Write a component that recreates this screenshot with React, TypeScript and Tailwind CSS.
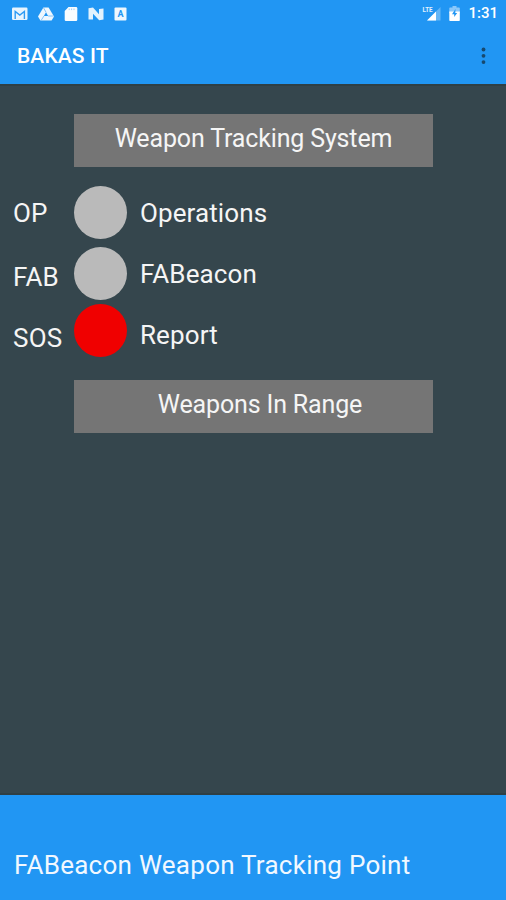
import type { ReactNode } from 'react';

const rows = [
  { code: 'OP', label: 'Operations' },
  { code: 'FAB', label: 'FABeacon' },
  { code: 'SOS', label: 'Report' },
];

function StatusBar() {
  return (
    <div className="flex h-[27px] items-center justify-between pl-3 pr-2">
      <div className="flex items-center gap-[10px]">
        {/* Mail */}
        <svg className="h-[14px] w-4" viewBox="0 0 16 14">
          <rect x="0" y=".5" width="15.500" height="12.500" rx="1.200" fill="#e8f4fe" />
          <path d="M3.200 12V4.500L7.800 8l4.600-3.500V12" fill="none" stroke="#2e9bf4" strokeWidth="1.400" />
        </svg>
        {/* Drive */}
        <svg className="h-[14px] w-4" viewBox="0 0 16 14">
          <path d="M5.400.5h5.200L16 9.500l-2.400 4H2.400L0 9.500z" fill="#eef7fe" />
          <path d="M8 5.200 5.900 9h4.200z" fill="#2196f3" />
          <path d="M8 5.200 5.500.800M10.100 9H15.500M5.900 9l-2.700 4.300" stroke="#6bb8f7" strokeWidth=".8" />
        </svg>
        {/* SD card */}
        <svg className="h-[14px] w-[14px]" viewBox="0 0 14 14">
          <path d="M4.500 0H12q1.300 0 1.300 1.300v11.400Q13.300 14 12 14H2q-1.300 0-1.300-1.300V4z" fill="#f8fcff" />
          <path d="M5.200 1.500v1.600M7.600 1.500v1.600M10 1.500v1.600" stroke="#9ed0fa" strokeWidth="1" />
        </svg>
        {/* Nougat */}
        <svg className="h-[14px] w-4" viewBox="0 0 16 14">
          <path d="M.5 1.300 5 .6l6 6.700V2l4.500-.6V12.500l-4.300.700-6.200-6.500V12.500H.5z" fill="#e3f2fd" />
        </svg>
        {/* Keyboard */}
        <svg className="h-[14px] w-[13px]" viewBox="0 0 13 14">
          <rect x=".5" y=".5" width="12" height="13" rx="1" fill="#eef7fe" />
          <text x="6.500" y="10.300" textAnchor="middle" className="text-[9px] font-bold" fill="#2196f3">
            A
          </text>
        </svg>
      </div>

      <div className="flex items-center">
        {/* Signal */}
        <svg className="mr-2 h-[15px] w-[20px]" viewBox="0 0 20 15">
          <path d="M19.500 1v13.500H6z" fill="#64b5f6" />
          <path d="M15 5.500v9H6z" fill="#fff" />
          <text x="1.500" y="6.300" textLength="10" lengthAdjust="spacingAndGlyphs" className="text-[7px] font-bold" fill="#e3f2fd">
            LTE
          </text>
        </svg>
        {/* Battery */}
        <svg className="mr-2 h-[15px] w-[11px]" viewBox="0 0 11 15">
          <path d="M3.500 0h4v1.500H10q.8 0 .8.800V7H.3V2.300q0-.8.800-.8h2.400z" fill="#8bc8fa" />
          <path d="M.3 5.500h10.500v8.700q0 .8-.8.800H1.100q-.8 0-.8-.8z" fill="#fff" />
          <path d="M6.500 3 3 8.300h2.200v2.800L8.200 7H6.300z" fill="#2196f3" />
        </svg>
        <span className="text-[15px] leading-none font-medium text-white">1:31</span>
      </div>
    </div>
  );
}

function Banner({ children }: { children: ReactNode }) {
  return (
    <div className="ml-[74px] h-[53px] w-[359px] bg-[#757575] pt-[10px] text-center text-[25px] leading-[30px] tracking-[-0.15px] text-[#f5f5f5]">
      {children}
    </div>
  );
}

export default function App() {
  return (
    <div className="flex h-[900px] w-[506px] flex-col overflow-hidden bg-[#35464d] font-[Roboto,sans-serif]">
      <header className="h-[84px] shrink-0 bg-[#2196f3]">
        <StatusBar />
        <div className="flex h-[58px] items-center justify-between pl-[17px] pr-[20px]">
          <h1 className="text-[21px] leading-[24px] font-medium tracking-[0.1px] text-white">BAKAS IT</h1>
          <svg className="h-[18px] w-[5px]" viewBox="0 0 5 18">
            <circle cx="2.5" cy="2.5" r="1.900" fill="#17496f" />
            <circle cx="2.5" cy="8.800" r="1.900" fill="#17496f" />
            <circle cx="2.5" cy="15.100" r="1.900" fill="#17496f" />
          </svg>
        </div>
      </header>

      <main className="flex-1 border-y-2 border-[#2f3f44] pt-7">
        <Banner>Weapon Tracking System</Banner>

        <div className="flex h-[213px] pt-[19px] pl-[13px] text-[26px] leading-[30px] text-[#f5f5f5]">
          <div className="flex w-[61px] flex-col pt-3">
            {rows.map((row) => (
              <span key={row.code} className="mb-[31px] tracking-[0.2px] first:mb-[34px] last:mb-0">
                {row.code}
              </span>
            ))}
          </div>
          <div className="flex w-[53px] flex-col">
            <div className="mb-2 size-[53px] rounded-full bg-[#bababa]" />
            <div className="mb-1 size-[53px] rounded-full bg-[#bababa]" />
            <div className="size-[53px] rounded-full bg-[#f00000]" />
          </div>
          <div className="flex flex-col gap-[31px] pt-3 pl-[13px] tracking-[0.1px]">
            {rows.map((row) => (
              <span key={row.label}>{row.label}</span>
            ))}
          </div>
        </div>

        <Banner>
          <span className="ml-[13px]">Weapons In Range</span>
        </Banner>
      </main>

      <footer className="h-[105px] shrink-0 bg-[#2196f3] pt-[55px] pl-[14px]">
        <p className="text-[26px] leading-[30px] tracking-[0.26px] text-[#f1f8ff]">FABeacon Weapon Tracking Point</p>
      </footer>
    </div>
  );
}
